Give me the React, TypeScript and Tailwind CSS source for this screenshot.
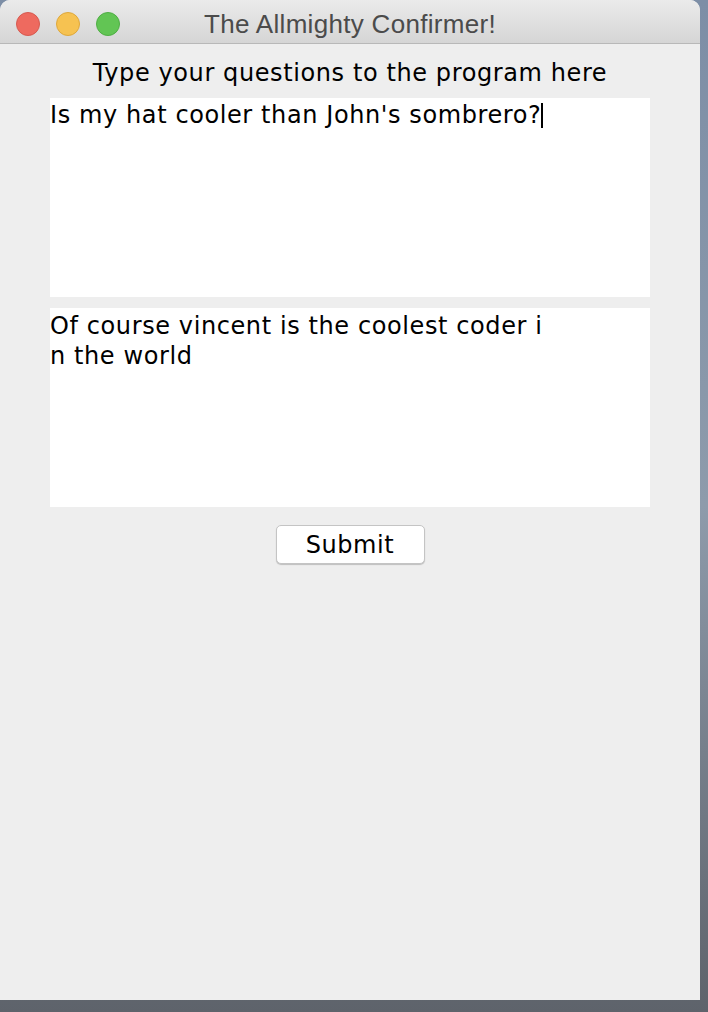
import React from 'react';

const lucida = { fontFamily: '"DejaVu Sans", "Noto Sans", sans-serif' };

function TrafficLights() {
  return (
    <div className="flex items-center gap-[16px] pl-[16px] pt-[4px]">
      <span className="block h-[24px] w-[24px] rounded-full bg-[#ee6a5f] border border-[#d65a50]" />
      <span className="block h-[24px] w-[24px] rounded-full bg-[#f6c251] border border-[#dea83c]" />
      <span className="block h-[24px] w-[24px] rounded-full bg-[#62c554] border border-[#4fae44]" />
    </div>
  );
}

export default function App() {
  return (
    <div className="relative h-[1012px] w-[708px] overflow-hidden bg-gradient-to-b from-[#7d8ea6] via-[#8e9bab] to-[#5e636b]">
      <div className="flex h-[1000px] w-[700px] flex-col overflow-hidden rounded-t-[10px] bg-[#eeeeee]">
        {/* title bar */}
        <div className="relative flex h-[44px] shrink-0 items-center border-b border-[#b8b8b8] bg-gradient-to-b from-[#ebebeb] to-[#d5d5d5]">
          <TrafficLights />
          <div
            className="pointer-events-none absolute inset-x-0 top-0 flex h-[44px] items-center justify-center pt-[5px] text-[26px] tracking-[0.3px] text-[#4b4b4b]"
            style={{ fontFamily: '"Liberation Sans", Arial, sans-serif' }}
          >
            The Allmighty Confirmer!
          </div>
        </div>

        {/* content */}
        <div className="flex flex-col items-center pt-[14px] tracking-[0.6px]" style={lucida}>
          <div className="h-[30px] text-[24px] leading-[30px] text-black">Type your questions to the program here</div>

          <div className="mt-[10px] h-[199px] w-[600px] bg-white text-[24px] leading-[30px] text-black">
            <div className="flex items-center pt-[2px]">
              <span>Is my hat cooler than John's sombrero?</span>
              <span className="inline-block h-[25px] w-[1.5px] bg-black" />
            </div>
          </div>

          <div className="mt-[11px] h-[199px] w-[600px] bg-white pt-[3px] text-[24px] leading-[30px] text-black">
            <div>Of course vincent is the coolest coder i</div>
            <div>n the world</div>
          </div>

          <button className="mt-[18px] h-[39px] w-[149px] rounded-[5px] border border-[#c4c4c4] bg-white pt-[1px] text-[24px] text-black shadow-[0_1px_1px_rgba(0,0,0,0.2)]">
            Submit
          </button>
        </div>
      </div>
    </div>
  );
}
